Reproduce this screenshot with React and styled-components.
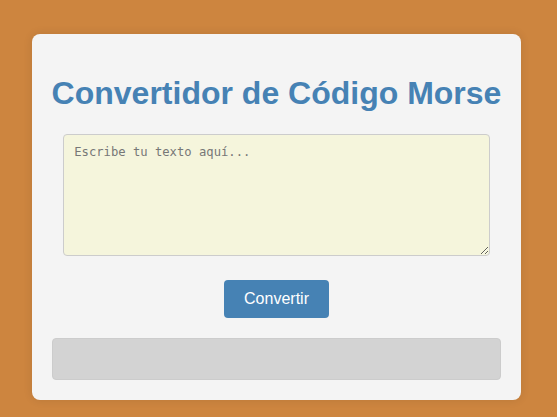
import React, { useState } from "react";
import styled, { createGlobalStyle } from "styled-components";

const GlobalStyle = createGlobalStyle`
  html, body {
    margin: 0;
    padding: 0;
  }
  body {
    background-color: #cd853f;
    font-family: "Liberation Sans", Arial, sans-serif;
    min-height: 417px;
    padding: 34px 36px 0 32px;
    box-sizing: border-box;
  }
`;

const Card = styled.div`
  width: 489px;
  box-sizing: border-box;
  background-color: #f4f4f4;
  border-radius: 8px;
  box-shadow: 0 0 10px rgba(0, 0, 0, 0.1);
  padding: 20px;
  display: flex;
  flex-direction: column;
  align-items: center;
`;

const Title = styled.h1`
  margin: 21px 0 22px;
  font-size: 32px;
  font-weight: bold;
  color: #4682b4;
  text-align: center;
  line-height: 37px;
  white-space: nowrap;
`;

const Input = styled.textarea`
  height: 100px;
  padding: 10px;
  box-sizing: content-box;
  width: calc(95% - 22px);
  border: 1px solid #ccc;
  border-radius: 4px;
  background-color: #f5f5dc;
  font-family: "DejaVu Sans Mono", monospace;
  font-size: 12.2px;
  color: #333;
  outline: none;
  margin: 0;

  &::placeholder {
    color: #777;
  }
`;

const Button = styled.button`
  margin-top: 24px;
  padding: 10px 20px;
  background-color: #4682b4;
  color: #fff;
  border: none;
  border-radius: 4px;
  font-family: "Liberation Sans", Arial, sans-serif;
  font-size: 16px;
  line-height: 18px;
  cursor: pointer;
`;

const Result = styled.div`
  margin-top: 20px;
  align-self: stretch;
  height: 40px;
  background-color: #d3d3d3;
  border: 1px solid #ccc;
  border-radius: 4px;
  font-family: "DejaVu Sans Mono", monospace;
`;

const App = () => {
  const [text, setText] = useState("");
  const [result, setResult] = useState("");
  return (
    <>
      <GlobalStyle />
      <Card>
        <Title>Convertidor de Código Morse</Title>
        <Input
          placeholder="Escribe tu texto aquí..."
          value={text}
          onChange={(e) => setText(e.target.value)}
        />
        <Button onClick={() => setResult(text)}>Convertir</Button>
        <Result>{result}</Result>
      </Card>
    </>
  );
};

export default App;
